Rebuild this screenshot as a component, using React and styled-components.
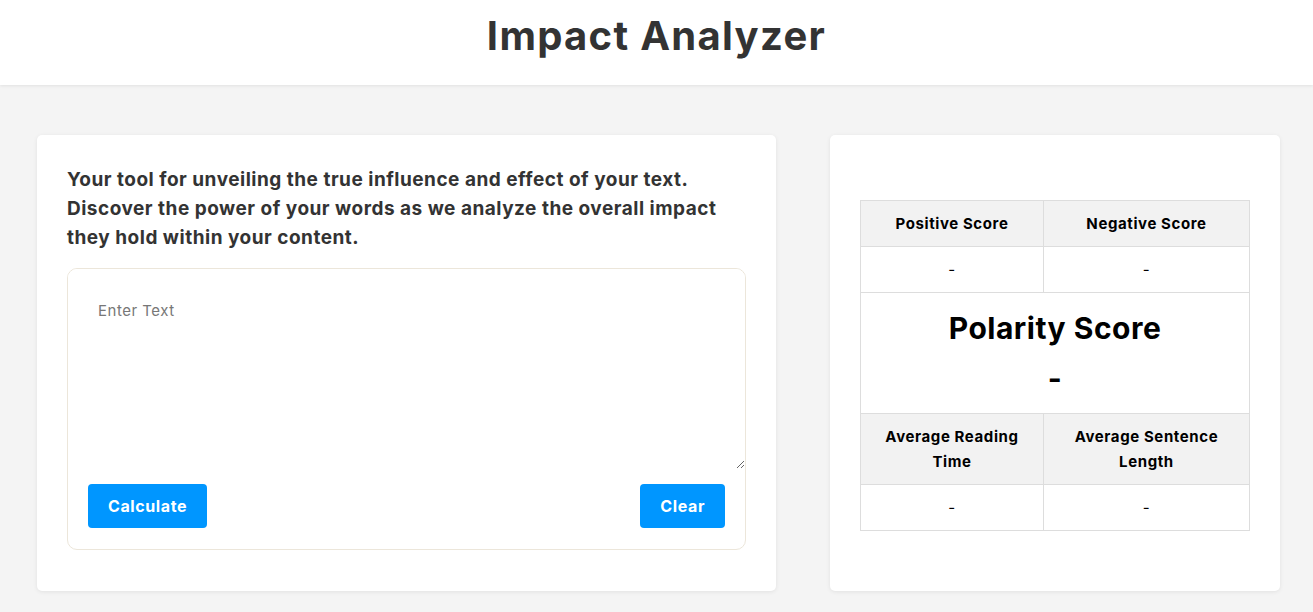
import React, { useState } from 'react';
import styled, { createGlobalStyle } from 'styled-components';

const GlobalStyle = createGlobalStyle`
  * {
    box-sizing: border-box;
  }

  body {
    margin: 0;
    background-color: #f4f4f4;
    font-family: Inter, 'Noto Sans', sans-serif;
    color: #333;
  }
`;

const Header = styled.header`
  height: 85px;
  background: white;
  display: flex;
  justify-content: center;
  align-items: center;
  box-shadow: 0 1px 3px rgba(0, 0, 0, 0.08);

  h1 {
    margin: 0 0 14px;
    font-size: 40px;
    font-weight: 700;
    letter-spacing: 1.3px;
    color: #333;
  }
`;

const Main = styled.main`
  display: flex;
  align-items: stretch;
  gap: 54px;
  padding: 50px 33px 22px 37px;
`;

const Card = styled.section`
  background: white;
  border-radius: 5px;
  box-shadow: 0 1px 4px rgba(0, 0, 0, 0.08);
  width: ${(props) => props.width}px;
  flex-shrink: 0;
`;

const InputCard = styled(Card)`
  padding: 30px 30px 40px;
`;

const ResultCard = styled(Card)`
  padding: 65px 30px 60px;
`;

const Intro = styled.p`
  margin: 0 0 16px;
  font-size: 19px;
  font-weight: 700;
  line-height: 29px;
  letter-spacing: 0.5px;
  color: #333;
`;

const Form = styled.form`
  border: 1px solid #ece6da;
  border-radius: 10px;
  overflow: hidden;
`;

const TextArea = styled.textarea`
  display: block;
  width: 100%;
  height: 200px;
  border: none;
  outline: none;
  padding: 30px;
  font-family: inherit;
  font-size: 15px;
  line-height: 24px;
  letter-spacing: 0.5px;
  color: #333;

  &::placeholder {
    color: #777;
  }
`;

const ButtonRow = styled.div`
  display: flex;
  justify-content: space-between;
  padding: 0 20px 21px;
  margin-top: 15px;
`;

const Button = styled.button`
  height: 44px;
  padding: 0 20px;
  border: none;
  border-radius: 4px;
  background-color: #0096ff;
  color: white;
  font-family: inherit;
  font-size: 16px;
  font-weight: 700;
  letter-spacing: 0.6px;
  cursor: pointer;
`;

const Table = styled.table`
  width: 100%;
  border-collapse: collapse;
  text-align: center;
  color: #000;

  th,
  td {
    border: 1px solid #ddd;
    padding: 10px 12px;
    font-size: 15px;
    line-height: 25px;
    letter-spacing: 0.6px;
  }

  th {
    background-color: #f2f2f2;
    font-weight: 700;
  }

  td {
    font-weight: 400;
  }
`;

const Polarity = styled.td`
  && {
    font-size: 30px;
    font-weight: 700;
    line-height: 50px;
    letter-spacing: 0.5px;
  }
`;

const App = () => {
  const [text, setText] = useState('');

  return (
    <>
      <GlobalStyle />
      <Header>
        <h1>Impact Analyzer</h1>
      </Header>
      <Main>
        <InputCard width={739}>
          <Intro>
            Your tool for unveiling the true influence and effect of your text.
            Discover the power of your words as we analyze the overall impact
            they hold within your content.
          </Intro>
          <Form onSubmit={(e) => e.preventDefault()}>
            <TextArea
              placeholder="Enter Text"
              value={text}
              onChange={(e) => setText(e.target.value)}
            />
            <ButtonRow>
              <Button type="submit">Calculate</Button>
              <Button type="button" onClick={() => setText('')}>
                Clear
              </Button>
            </ButtonRow>
          </Form>
        </InputCard>
        <ResultCard width={450}>
          <Table>
            <tbody>
              <tr>
                <th>Positive Score</th>
                <th>Negative Score</th>
              </tr>
              <tr>
                <td>-</td>
                <td>-</td>
              </tr>
              <tr>
                <Polarity colSpan={2}>
                  Polarity Score
                  <br />-
                </Polarity>
              </tr>
              <tr>
                <th>Average Reading Time</th>
                <th>Average Sentence Length</th>
              </tr>
              <tr>
                <td>-</td>
                <td>-</td>
              </tr>
            </tbody>
          </Table>
        </ResultCard>
      </Main>
    </>
  );
};

export default App;
